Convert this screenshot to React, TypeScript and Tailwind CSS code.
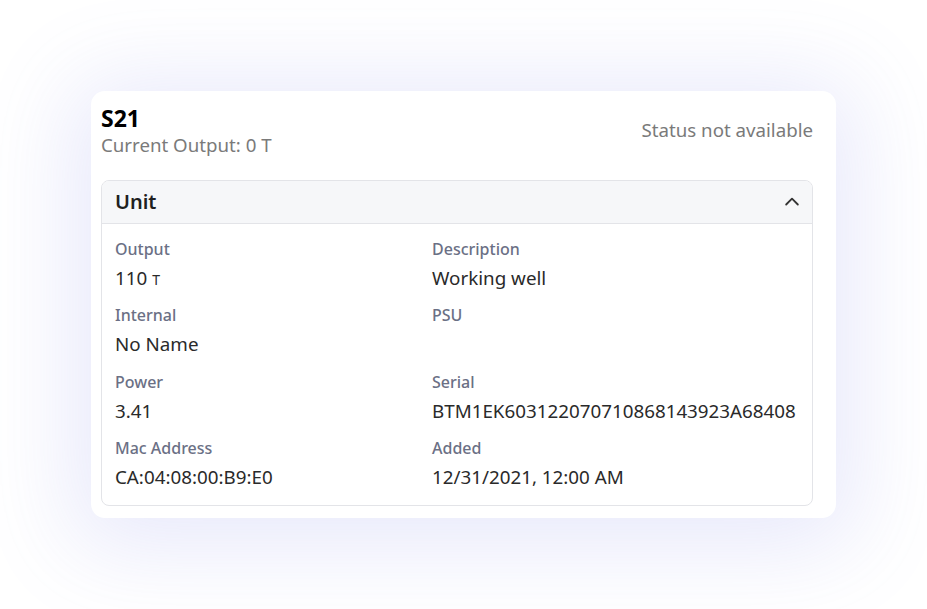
import React from 'react';

const fields: { label: string; value: React.ReactNode }[] = [
  { label: 'Output', value: <>110 <span className="text-[14px]">T</span></> },
  { label: 'Description', value: 'Working well' },
  { label: 'Internal', value: 'No Name' },
  { label: 'PSU', value: '' },
  { label: 'Power', value: '3.41' },
  { label: 'Serial', value: 'BTM1EK603122070710868143923A68408' },
  { label: 'Mac Address', value: 'CA:04:08:00:B9:E0' },
  { label: 'Added', value: '12/31/2021, 12:00 AM' },
];

const ChevronUp = () => (
  <svg width="20" height="20" viewBox="0 0 24 24" fill="none" stroke="#333" strokeWidth="2.2" strokeLinecap="round" strokeLinejoin="round">
    <path d="M5 15l7-7 7 7" />
  </svg>
);

export default function App() {
  return (
    <div
      className="h-screen w-full flex items-center justify-center bg-white"
      style={{ fontFamily: '"Noto Sans", "Open Sans", sans-serif' }}
    >
      <div className="w-[745px] bg-white rounded-[14px] shadow-[0_10px_90px_20px_rgba(110,120,230,0.16)] pl-[10px] pr-[23px] pt-[13px] pb-[12px]">
        <div className="flex items-start justify-between">
          <div>
            <div className="text-[23px] font-bold leading-[28px] text-black">S21</div>
            <div className="text-[18.7px] leading-[26px] text-[#7a7a7a]">Current Output: 0 T</div>
          </div>
          <div className="text-[18.7px] leading-[24px] text-[#7a7a7a] pt-[14px]">Status not available</div>
        </div>
        <div className="mt-[22px] border border-[#e3e4e8] rounded-[8px] overflow-hidden">
          <div className="h-[43px] bg-[#f6f7f9] border-b border-[#e3e4e8] flex items-center justify-between pl-[13px] pr-[10px]">
            <span className="text-[20px] font-semibold text-[#1f1f1f]">Unit</span>
            <ChevronUp />
          </div>
          <div className="grid grid-cols-[317px_1fr] pl-[13px] pr-[10px] pt-[14px] pb-[14px] gap-y-[12.5px]">
            {fields.map((f) => (
              <div key={f.label} className="flex flex-col">
                <span className="text-[16px] leading-[22px] font-medium text-[#6b7085]">{f.label}</span>
                <span className="text-[18.8px] leading-[28px] text-[#2a2a2a] mt-[4px] h-[28px]">{f.value}</span>
              </div>
            ))}
          </div>
        </div>
      </div>
    </div>
  );
}
